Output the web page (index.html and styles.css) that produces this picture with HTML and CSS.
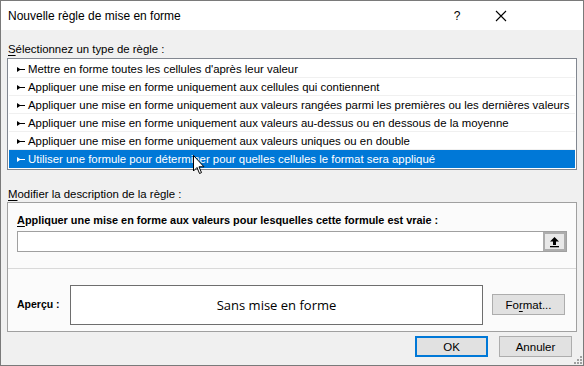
FILE: index.html
```html
<!DOCTYPE html>
<html lang="fr">
<head>
<meta charset="utf-8">
<title>Nouvelle règle de mise en forme</title>
<link rel="stylesheet" href="styles.css">
</head>
<body>
<div class="window">
  <div class="titlebar">
    <span class="title">Nouvelle règle de mise en forme</span>
    <span class="help">?</span>
    <span class="close">
      <svg width="12" height="12" viewBox="0 0 12 12"><path d="M1 1 L11 11 M11 1 L1 11" stroke="#000" stroke-width="1.1" fill="none"/></svg>
    </span>
  </div>
  <div class="content">
    <div class="label"><u>S</u>électionnez un type de règle :</div>
    <ul class="rulelist">
      <li class="rule"><svg class="mark" width="8" height="5" viewBox="0 0 8 5"><path d="M0 0 L0 5 L3 3 L8 3 L8 2 L3 2 Z" fill="#000"/></svg>Mettre en forme toutes les cellules d'après leur valeur</li>
      <li class="rule"><svg class="mark" width="8" height="5" viewBox="0 0 8 5"><path d="M0 0 L0 5 L3 3 L8 3 L8 2 L3 2 Z" fill="#000"/></svg>Appliquer une mise en forme uniquement aux cellules qui contiennent</li>
      <li class="rule"><svg class="mark" width="8" height="5" viewBox="0 0 8 5"><path d="M0 0 L0 5 L3 3 L8 3 L8 2 L3 2 Z" fill="#000"/></svg>Appliquer une mise en forme uniquement aux valeurs rangées parmi les premières ou les dernières valeurs</li>
      <li class="rule"><svg class="mark" width="8" height="5" viewBox="0 0 8 5"><path d="M0 0 L0 5 L3 3 L8 3 L8 2 L3 2 Z" fill="#000"/></svg>Appliquer une mise en forme uniquement aux valeurs au-dessus ou en dessous de la moyenne</li>
      <li class="rule"><svg class="mark" width="8" height="5" viewBox="0 0 8 5"><path d="M0 0 L0 5 L3 3 L8 3 L8 2 L3 2 Z" fill="#000"/></svg>Appliquer une mise en forme uniquement aux valeurs uniques ou en double</li>
      <li class="rule selected"><svg class="mark" width="8" height="5" viewBox="0 0 8 5"><path d="M0 0 L0 5 L3 3 L8 3 L8 2 L3 2 Z" fill="#fff"/></svg>Utiliser une formule pour déterminer pour quelles cellules le format sera appliqué</li>
    </ul>
    <div class="label label2"><u>M</u>odifier la description de la règle :</div>
    <div class="descbox">
      <div class="formula">
        <div class="boldlabel"><u>A</u>ppliquer une mise en forme aux valeurs pour lesquelles cette formule est vraie :</div>
        <div class="input">
          <span class="refbtn">
            <svg width="11" height="12" viewBox="0 0 11 12"><path d="M5.5 1 L1 5.5 L4 5.5 L4 9 L7 9 L7 5.5 L10 5.5 Z" fill="#000"/><rect x="1" y="10" width="9" height="1.3" fill="#000"/></svg>
          </span>
        </div>
      </div>
      <div class="previewrow">
        <span class="boldlabel small">Aperçu :</span>
        <div class="preview">Sans mise en forme</div>
        <button class="btn fmt">Fo<u>r</u>mat...</button>
      </div>
    </div>
    <div class="actions">
      <button class="btn ok">OK</button>
      <button class="btn">Annuler</button>
    </div>
  </div>
  <svg class="grip" width="10" height="10" viewBox="0 0 10 10"><g fill="#a0a0a0"><rect x="8" y="2" width="2" height="2"/><rect x="5" y="5" width="2" height="2"/><rect x="8" y="5" width="2" height="2"/><rect x="2" y="8" width="2" height="2"/><rect x="5" y="8" width="2" height="2"/><rect x="8" y="8" width="2" height="2"/></g></svg>
  <svg class="cursor" width="13" height="20" viewBox="0 0 13 20"><path d="M0.5 0.5 L0.5 16 L4 12.5 L6.5 18.5 L8.5 17.6 L6 11.8 L11 11.8 Z" fill="#fff" stroke="#000" stroke-width="1"/></svg>
</div>
</body>
</html>
```
FILE: styles.css
```css
* { box-sizing: border-box; }
html, body { margin: 0; padding: 0; }
body {
  font-family: "Liberation Sans", Arial, sans-serif;
  font-size: 11.4px;
  color: #000;
}
.window {
  position: relative;
  width: 584px;
  height: 366px;
  border: 1px solid #7a7a7a;
  background: #f0f0f0;
  display: flex;
  flex-direction: column;
  overflow: hidden;
}
.titlebar {
  height: 29px;
  background: #fff;
  display: flex;
  align-items: center;
  padding-left: 7px;
  flex-shrink: 0;
}
.title { font-size: 12px; flex: 1; }
.help { width: 14px; margin-right: 31px; text-align: center; font-size: 12px; }
.close { width: 12px; height: 12px; margin-right: 76px; display: flex; }
.content {
  padding: 0 6px;
  display: flex;
  flex-direction: column;
}
.label { margin-top: 9px; height: 18px; line-height: 20px; padding-left: 1px; }
.label2 { margin-top: 14px; }
u { text-decoration: underline; text-underline-offset: 2px; }
.rulelist {
  list-style: none;
  margin: 1px 0 0;
  padding: 1px;
  background: #fff;
  border: 1px solid #828790;
  width: 570px;
}
.rule {
  height: 18px;
  line-height: 17px;
  padding-left: 8px;
  padding-top: 1px;
  border-bottom: 1px solid #f0f0f0;
  display: flex;
  align-items: center;
  white-space: nowrap;
}
.rule .mark { margin-right: 3px; flex-shrink: 0; }
.rule.selected { background: #0078d7; color: #fff; border-bottom-color: #0078d7; }
.descbox {
  margin-top: 0;
  width: 570px;
  height: 130px;
  border: 1px solid #a0a0a0;
  background: #fbfbfb;
  display: flex;
  flex-direction: column;
}
.formula {
  height: 66px;
  border-bottom: 1px solid #d9d9d9;
  padding: 9px 9px 0;
}
.boldlabel { font-weight: bold; font-size: 10.9px; height: 17px; line-height: 17px; }
.boldlabel.small { font-size: 10.5px; width: 53px; flex-shrink: 0; }
.input {
  margin-top: 2px;
  height: 21px;
  width: 550px;
  border: 1px solid #a0a0a0;
  background: #fff;
  display: flex;
  justify-content: flex-end;
}
.refbtn {
  width: 23px;
  height: 19px;
  border: 2px solid #adadad;
  background: #e8e8e8;
  display: flex;
  align-items: center;
  justify-content: center;
}
.previewrow {
  flex: 1;
  display: flex;
  align-items: center;
  padding: 9px 11px 0 9px;
}
.preview {
  width: 413px;
  height: 40px;
  border: 1px solid #6e6e6e;
  background: #fff;
  display: flex;
  align-items: center;
  justify-content: center;
  font-family: "Open Sans", sans-serif;
  font-size: 13px;
  margin-right: 9px;
  flex-shrink: 0;
}
.btn {
  font-family: inherit;
  font-size: 11.5px;
  height: 21px;
  width: 73px;
  background: #e1e1e1;
  border: 1px solid #adadad;
  padding: 0;
  color: #000;
}
.fmt { width: 73px; flex-shrink: 0; }
.actions {
  display: flex;
  justify-content: flex-end;
  gap: 11px;
  margin-top: 4px;
  padding-right: 5px;
}
.ok { border: 2px solid #0078d7; }
.grip { position: absolute; right: 1px; bottom: 1px; }
.cursor { position: absolute; left: 192px; top: 154px; }
```
